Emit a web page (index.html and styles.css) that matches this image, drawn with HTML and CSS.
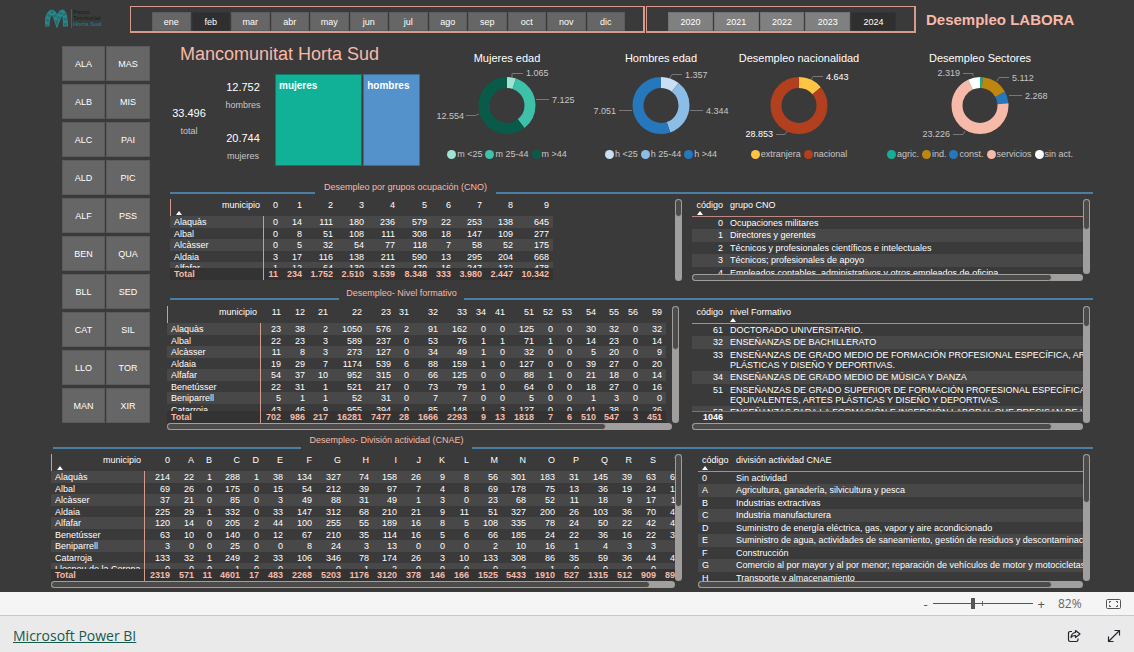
FILE: index.html
```html
<!DOCTYPE html>
<html lang="es">
<head>
<meta charset="utf-8">
<title>Desempleo LABORA</title>
<link rel="stylesheet" href="styles.css">
</head>
<body>
<div class="report">
  <header class="top">
    <div class="logo">
      <svg class="logo-mark" viewBox="0 0 23 18" aria-hidden="true">
        <path d="M2 17 C2 9 4 4 6 3 C9 1 11 9 12 12 C14 7 16 1 18 3 C20 5 20.500 10 20.500 17" fill="none" stroke="#26868c" stroke-width="5"/>
        <path d="M2 17 C2 9 4 4 6 3 C9 1 11 9 12 12 C14 7 16 1 18 3 C20 5 20.500 10 20.500 17" fill="none" stroke="#2f6a62" stroke-width="3" stroke-dasharray="2 3"/>
      </svg>
      <div class="logo-text"><span>Pacto</span><span>Territorial</span><span class="logo-accent">Horta Sud</span></div>
    </div>
    <div class="slicer months">
      <button>ene</button><button class="on">feb</button><button>mar</button><button>abr</button><button>may</button><button>jun</button><button>jul</button><button>ago</button><button>sep</button><button>oct</button><button>nov</button><button>dic</button>
    </div>
    <div class="slicer years">
      <button>2020</button><button>2021</button><button>2022</button><button>2023</button><button class="on">2024</button>
    </div>
    <h1>Desempleo LABORA</h1>
  </header>

  <div class="middle">
    <nav class="towns">
      <button>ALA</button><button>MAS</button>
      <button>ALB</button><button>MIS</button>
      <button>ALC</button><button>PAI</button>
      <button>ALD</button><button>PIC</button>
      <button>ALF</button><button>PSS</button>
      <button>BEN</button><button>QUA</button>
      <button>BLL</button><button>SED</button>
      <button>CAT</button><button>SIL</button>
      <button>LLO</button><button>TOR</button>
      <button>MAN</button><button>XIR</button>
    </nav>

    <main>
      <div class="overview">
        <div class="summary">
          <h2>Mancomunitat Horta Sud</h2>
          <div class="summary-body">
            <div class="kpi total"><b>33.496</b><span>total</span></div>
            <div class="kpi-pair">
              <div class="kpi"><b>12.752</b><span>hombres</span></div>
              <div class="kpi"><b>20.744</b><span>mujeres</span></div>
            </div>
            <div class="treemap"><div class="tile women">mujeres</div><div class="tile men">hombres</div></div>
          </div>
        </div>
        <div class="charts">
          <figure>
            <h3>Mujeres edad</h3>
            <svg class="donut" viewBox="-75 -40 150 80">
              <g class="ring">
                <circle r="23" pathLength="20744" stroke="#a0e3d5" stroke-dasharray="1065 20744"/>
                <circle r="23" pathLength="20744" stroke="#3dc2a9" stroke-dasharray="7125 20744" stroke-dashoffset="-1065"/>
                <circle r="23" pathLength="20744" stroke="#0a5a49" stroke-dasharray="12554 20744" stroke-dashoffset="-8190"/>
              </g>
              <path class="leader" d="M5 -28V-31.5H16M29 -5.5H42M-41 10.5H-32L-28 9"/>
              <text x="19" y="-29">1.065</text><text x="45" y="-2">7.125</text><text class="end" x="-43" y="14">12.554</text>
            </svg>
            <ul class="legend"><li class="m1">m &lt;25</li><li class="m2">m 25-44</li><li class="m3">m &gt;44</li></ul>
          </figure>
          <figure>
            <h3>Hombres edad</h3>
            <svg class="donut" viewBox="-75 -40 150 80">
              <g class="ring">
                <circle r="23" pathLength="12752" stroke="#c9dff3" stroke-dasharray="1357 12752"/>
                <circle r="23" pathLength="12752" stroke="#8bbde6" stroke-dasharray="4344 12752" stroke-dashoffset="-1357"/>
                <circle r="23" pathLength="12752" stroke="#2777bd" stroke-dasharray="7051 12752" stroke-dashoffset="-5701"/>
              </g>
              <path class="leader" d="M9 -27L11 -30.5H21M29 5.5H42M-42 5.5H-29"/>
              <text x="24" y="-27">1.357</text><text x="45" y="9">4.344</text><text class="end" x="-45" y="9">7.051</text>
            </svg>
            <ul class="legend"><li class="h1">h &lt;25</li><li class="h2">h 25-44</li><li class="h3">h &gt;44</li></ul>
          </figure>
          <figure>
            <h3>Desempleo nacionalidad</h3>
            <svg class="donut bright" viewBox="-75 -40 150 80">
              <g class="ring">
                <circle r="23" pathLength="33496" stroke="#ffc444" stroke-dasharray="4643 33496"/>
                <circle r="23" pathLength="33496" stroke="#b23f1e" stroke-dasharray="28853 33496" stroke-dashoffset="-4643"/>
              </g>
              <path class="leader" d="M12 -25L14 -28.5H24M-23 29.5H-14L-12 26"/>
              <text x="27" y="-25">4.643</text><text class="end" x="-26" y="32">28.853</text>
            </svg>
            <ul class="legend"><li class="n1">extranjera</li><li class="n2">nacional</li></ul>
          </figure>
          <figure class="sectors">
            <h3>Desempleo Sectores</h3>
            <svg class="donut" viewBox="-75 -40 150 80">
              <g class="ring">
                <circle r="23" pathLength="33496" stroke="#12b097" stroke-dasharray="571 33496"/>
                <circle r="23" pathLength="33496" stroke="#bd8610" stroke-dasharray="5112 33496" stroke-dashoffset="-571"/>
                <circle r="23" pathLength="33496" stroke="#2777bd" stroke-dasharray="2268 33496" stroke-dashoffset="-5683"/>
                <circle r="23" pathLength="33496" stroke="#f7b9a8" stroke-dasharray="23226 33496" stroke-dashoffset="-7951"/>
                <circle r="23" pathLength="33496" stroke="#ffffff" stroke-dasharray="2319 33496" stroke-dashoffset="-31177"/>
              </g>
              <path class="leader" d="M-17 -31.5H-7V-29M17 -24L19 -27.5H29M29 -9.5H42M-27 29.5H-17L-15 26"/>
              <text class="end" x="-20" y="-29">2.319</text><text x="32" y="-24">5.112</text><text x="45" y="-6">2.268</text><text class="end" x="-30" y="32">23.226</text>
            </svg>
            <ul class="legend"><li class="s1">agric.</li><li class="s2">ind.</li><li class="s3">const.</li><li class="s4">servicios</li><li class="s5">sin act.</li></ul>
          </figure>
        </div>
      </div>

      <section class="block cno">
        <div class="rule"><h2>Desempleo por grupos ocupación (CNO)</h2></div>
        <div class="block-body">
          <div class="view matrix-view">
            <table class="matrix">
              <thead><tr><th class="sorted">municipio<th>0<th>1<th>2<th>3<th>4<th>5<th>6<th>7<th>8<th>9</thead>
              <tbody>
                <tr><th>Alaquàs<td>0<td>14<td>111<td>180<td>236<td>579<td>22<td>253<td>138<td>645
                <tr><th>Albal<td>0<td>8<td>51<td>108<td>111<td>308<td>18<td>147<td>109<td>277
                <tr><th>Alcàsser<td>0<td>5<td>32<td>54<td>77<td>118<td>7<td>58<td>52<td>175
                <tr><th>Aldaia<td>3<td>17<td>116<td>138<td>211<td>590<td>13<td>295<td>204<td>668
                <tr><th>Alfafar<td>1<td>12<td>64<td>130<td>163<td>470<td>16<td>247<td>132<td>478
              </tbody>
              <tfoot><tr><th>Total<td>11<td>234<td>1.752<td>2.510<td>3.539<td>8.348<td>333<td>3.980<td>2.447<td>10.342</tfoot>
            </table>
            <div class="vbar"><span></span></div>
          </div>
          <div class="view key-view">
            <table class="key">
              <thead><tr><th class="sorted">código<th>grupo CNO</thead>
              <tbody>
                <tr><td>0<td>Ocupaciones militares
                <tr><td>1<td>Directores y gerentes
                <tr><td>2<td>Técnicos y profesionales científicos e intelectuales
                <tr><td>3<td>Técnicos; profesionales de apoyo
                <tr><td>4<td>Empleados contables, administrativos y otros empleados de oficina
              </tbody>
            </table>
            <div class="vbar"><span></span></div>
            <div class="hbar"><span></span></div>
          </div>
        </div>
      </section>

      <section class="block nivel">
        <div class="rule"><h2>Desempleo- Nivel formativo</h2></div>
        <div class="block-body">
          <div class="view matrix-view">
            <table class="matrix">
              <thead><tr><th>municipio<th>11<th>12<th>21<th>22<th>23<th>31<th>32<th>33<th>34<th>41<th>51<th>52<th>53<th>54<th>55<th>56<th>59</thead>
              <tbody>
                <tr><th>Alaquàs<td>23<td>38<td>2<td>1050<td>576<td>2<td>91<td>162<td>0<td>0<td>125<td>0<td>0<td>30<td>32<td>0<td>32
                <tr><th>Albal<td>22<td>23<td>3<td>589<td>237<td>0<td>53<td>76<td>1<td>1<td>71<td>1<td>0<td>14<td>23<td>0<td>14
                <tr><th>Alcàsser<td>11<td>8<td>3<td>273<td>127<td>0<td>34<td>49<td>1<td>0<td>32<td>0<td>0<td>5<td>20<td>0<td>9
                <tr><th>Aldaia<td>19<td>29<td>7<td>1174<td>539<td>6<td>88<td>159<td>1<td>0<td>127<td>0<td>0<td>39<td>27<td>0<td>20
                <tr><th>Alfafar<td>54<td>37<td>10<td>952<td>315<td>0<td>66<td>125<td>0<td>0<td>88<td>1<td>0<td>21<td>18<td>0<td>14
                <tr><th>Benetússer<td>22<td>31<td>1<td>521<td>217<td>0<td>73<td>79<td>1<td>0<td>64<td>0<td>0<td>18<td>27<td>0<td>16
                <tr><th>Beniparrell<td>5<td>1<td>1<td>52<td>31<td>0<td>7<td>7<td>0<td>0<td>5<td>0<td>0<td>1<td>3<td>0<td>0
                <tr><th>Catarroja<td>43<td>46<td>9<td>955<td>394<td>0<td>85<td>148<td>1<td>3<td>127<td>0<td>0<td>41<td>38<td>0<td>26
              </tbody>
              <tfoot><tr><th>Total<td>702<td>986<td>217<td>16281<td>7477<td>28<td>1666<td>2293<td>9<td>13<td>1818<td>7<td>6<td>510<td>547<td>3<td>451</tfoot>
            </table>
            <div class="vbar"><span></span></div>
            <div class="hbar"><span></span></div>
          </div>
          <div class="view key-view">
            <table class="key">
              <thead><tr><th>código<th class="sorted">nivel Formativo</thead>
              <tbody>
                <tr><td>61<td>DOCTORADO UNIVERSITARIO.
                <tr><td>32<td>ENSEÑANZAS DE BACHILLERATO
                <tr><td>33<td>ENSEÑANZAS DE GRADO MEDIO DE FORMACIÓN PROFESIONAL ESPECÍFICA, ARTES<br>PLÁSTICAS Y DISEÑO Y DEPORTIVAS.
                <tr><td>34<td>ENSEÑANZAS DE GRADO MEDIO DE MÚSICA Y DANZA
                <tr><td>51<td>ENSEÑANZAS DE GRADO SUPERIOR DE FORMACIÓN PROFESIONAL ESPECÍFICA Y<br>EQUIVALENTES, ARTES PLÁSTICAS Y DISEÑO Y DEPORTIVAS.
                <tr><td>53<td>ENSEÑANZAS PARA LA FORMACIÓN E INSERCIÓN LABORAL QUE PRECISAN DE UNA
              </tbody>
              <tfoot><tr><td>1046<td></tfoot>
            </table>
            <div class="vbar"><span></span></div>
            <div class="hbar"><span></span></div>
          </div>
        </div>
      </section>
    </main>
  </div>

  <section class="block cnae">
    <div class="rule"><h2>Desempleo- División actividad (CNAE)</h2></div>
    <div class="block-body">
      <div class="view matrix-view">
        <table class="matrix">
          <thead><tr><th class="sorted">municipio<th>0<th>A<th>B<th>C<th>D<th>E<th>F<th>G<th>H<th>I<th>J<th>K<th>L<th>M<th>N<th>O<th>P<th>Q<th>R<th>S<th>T</thead>
          <tbody>
            <tr><th>Alaquàs<td>214<td>22<td>1<td>288<td>1<td>38<td>134<td>327<td>74<td>158<td>26<td>9<td>8<td>56<td>301<td>183<td>31<td>145<td>39<td>63<td>66
            <tr><th>Albal<td>69<td>26<td>0<td>175<td>0<td>15<td>54<td>212<td>39<td>97<td>7<td>4<td>8<td>69<td>178<td>75<td>13<td>36<td>19<td>24<td>16
            <tr><th>Alcàsser<td>37<td>21<td>0<td>85<td>0<td>3<td>49<td>88<td>31<td>49<td>1<td>3<td>0<td>23<td>68<td>52<td>11<td>18<td>9<td>17<td>11
            <tr><th>Aldaia<td>225<td>29<td>1<td>332<td>0<td>33<td>147<td>312<td>68<td>210<td>21<td>9<td>11<td>51<td>327<td>200<td>26<td>103<td>36<td>70<td>41
            <tr><th>Alfafar<td>120<td>14<td>0<td>205<td>2<td>44<td>100<td>255<td>55<td>189<td>16<td>8<td>5<td>108<td>335<td>78<td>24<td>50<td>22<td>42<td>46
            <tr><th>Benetússer<td>63<td>10<td>0<td>140<td>0<td>12<td>67<td>210<td>35<td>114<td>16<td>5<td>6<td>66<td>185<td>24<td>22<td>36<td>16<td>22<td>33
            <tr><th>Beniparrell<td>3<td>0<td>0<td>25<td>0<td>0<td>8<td>24<td>3<td>13<td>0<td>0<td>0<td>2<td>10<td>16<td>1<td>4<td>3<td>3<td>1
            <tr><th>Catarroja<td>133<td>32<td>1<td>249<td>2<td>33<td>106<td>346<td>78<td>174<td>26<td>3<td>10<td>133<td>308<td>86<td>35<td>59<td>36<td>44<td>46
            <tr><th>Llocnou de la Corona<td>0<td>0<td>0<td>1<td>0<td>0<td>1<td>0<td>1<td>2<td>0<td>0<td>0<td>0<td>2<td>1<td>0<td>0<td>0<td>0<td>0
          </tbody>
          <tfoot><tr><th>Total<td>2319<td>571<td>11<td>4601<td>17<td>483<td>2268<td>5203<td>1176<td>3120<td>378<td>146<td>166<td>1525<td>5433<td>1910<td>527<td>1315<td>512<td>909<td>890</tfoot>
        </table>
        <div class="vbar"><span></span></div>
        <div class="hbar"><span></span></div>
      </div>
      <div class="view key-view">
        <table class="key letters">
          <thead><tr><th class="sorted">código<th>división actividad CNAE</thead>
          <tbody>
            <tr><td>0<td>Sin actividad
            <tr><td>A<td>Agricultura, ganadería, silvicultura y pesca
            <tr><td>B<td>Industrias extractivas
            <tr><td>C<td>Industria manufacturera
            <tr><td>D<td>Suministro de energía eléctrica, gas, vapor y aire acondicionado
            <tr><td>E<td>Suministro de agua, actividades de saneamiento, gestión de residuos y descontaminación
            <tr><td>F<td>Construcción
            <tr><td>G<td>Comercio al por mayor y al por menor; reparación de vehículos de motor y motocicletas
            <tr><td>H<td>Transporte y almacenamiento
          </tbody>
        </table>
        <div class="vbar"><span></span></div>
        <div class="hbar"><span></span></div>
      </div>
    </div>
  </section>
</div>

<div class="zoombar">
  <button aria-label="Alejar">-</button>
  <input type="range" min="0" max="100" value="40" aria-label="Zoom">
  <button aria-label="Acercar">+</button>
  <output>82%</output>
  <button class="fit" aria-label="Ajustar a la página">
    <svg viewBox="0 0 15 12" fill="none" stroke="#555"><rect x=".5" y="1.5" width="14" height="9" rx="1"/><path d="M3.5 5V3.5H5M10 3.5H11.5V5M11.5 7V8.5H10M5 8.5H3.500V7"/></svg>
  </button>
</div>
<footer>
  <a href="#">Microsoft Power BI</a>
  <button aria-label="Compartir"><svg viewBox="0 0 14 14" fill="none" stroke="#2b2430" stroke-width="1.2" stroke-linejoin="round"><path d="M5 2.500H3.200Q1.500 2.500 1.500 4.200V10.800Q1.500 12.500 3.200 12.500H9.300Q11 12.500 11 10.800V9.500"/><path d="M8.500 1.500L13 5L8.500 8.500V6.500Q5.500 6.300 4 8.500Q4.500 4 8.500 3.500Z"/></svg></button>
  <button aria-label="Pantalla completa"><svg viewBox="0 0 14 14" fill="none" stroke="#2b2430" stroke-width="1.2"><path d="M1.500 12.500L12.500 1.500M7.500 1.500H12.500V6.500M1.500 7.500V12.500H6.500"/></svg></button>
</footer>
</body>
</html>
```
FILE: styles.css
```css
* { box-sizing: border-box; }
body {
  margin: 0;
  min-height: 100vh;
  display: flex;
  flex-direction: column;
  background: #eaeaea;
  font-family: "Liberation Sans", Arial, sans-serif;
  font-size: 9px;
  line-height: 12px;
}
h1, h2, h3, figure, ul { margin: 0; padding: 0; }
button { font: inherit; color: inherit; border: 0; padding: 0; background: none; cursor: pointer; }

.report { background: #3a3a3a; color: #fff; padding: 6px 41px 4px 0; }

/* header */
.top { display: flex; align-items: flex-start; height: 40px; }
.logo { display: flex; gap: 3px; width: 130px; padding: 3px 0 0 45px; flex: none; }
.logo-mark { width: 23px; height: 19px; }
.logo-text { display: flex; flex-direction: column; border-left: 1px solid #1f6f74; padding-left: 1px; font-size: 6px; font-weight: bold; line-height: 6px; color: #152b25; }
.logo-accent { color: #1f7486; }
.slicer { display: flex; gap: 1px; height: 27px; padding: 5px 18px 0 21px; border: solid #d59c8e; border-width: 1px 2px 2px 1px; }
.slicer button { flex: 1; height: 19px; background: #666; border: 1px solid #5c5c5c; }
.months { width: 515px; }
.years { width: 270px; margin-left: 1px; }
.years button { background: #808080; border-color: #747474; }
.slicer .on { background: #2f2f2f; border-color: #333; }
h1 { margin-left: 10px; font-size: 15px; line-height: 28px; color: #f7b9a8; white-space: nowrap; }

/* municipality slicer */
.middle { display: flex; align-items: flex-start; }
.towns { display: grid; grid-template-columns: 43px 44px; grid-auto-rows: 35px; gap: 3px 1px; width: 88px; margin-left: 62px; flex: none; }
.towns button { background: #666; border: 1px solid #5a5a5a; }
main { flex: 1; min-width: 0; margin-left: 17px; }

/* overview */
.overview { display: flex; height: 135px; }
.summary { width: 263px; flex: none; }
.summary h2 { padding-left: 13px; font-size: 18px; line-height: 17px; font-weight: normal; color: #f7b9a8; white-space: nowrap; }
.summary-body { display: flex; align-items: center; margin-top: 11px; height: 92px; }
.kpi { display: flex; flex-direction: column; align-items: center; gap: 6px; color: #c8c6c4; }
.kpi b { font-size: 11px; font-weight: normal; color: #fff; }
.total { width: 44px; padding-top: 3px; }
.kpi-pair { display: flex; flex-direction: column; gap: 21px; width: 64px; padding-top: 2px; }
.treemap { display: flex; gap: 1px; width: 145px; height: 92px; }
.tile { border: 1px solid #0e7a6a; padding: 5px 3px; font-size: 10px; font-weight: bold; }
.women { flex: 20744; background: #10b196; }
.men { flex: 12752; background: #5392cb; border-color: #3f6c96; }

.charts { flex: 1; display: grid; grid-template-columns: 154px 154px 122px 1fr; padding-top: 6px; }
figure { display: flex; flex-direction: column; align-items: center; min-width: 0; }
.sectors { padding-left: 7px; }
figure h3 { font-size: 11px; line-height: 13px; font-weight: normal; white-space: nowrap; }
.donut { width: 150px; height: 80px; overflow: visible; flex: none; }
.ring { fill: none; stroke-width: 11; transform: translateY(.5px) rotate(-90deg); }
.leader { fill: none; stroke: #777; }
.donut text { fill: #c8c6c4; font-size: 9px; }
.donut .end { text-anchor: end; }
.bright text { fill: #fff; }
.legend { display: flex; gap: 3px; margin-top: 3px; list-style: none; color: #c8c6c4; white-space: nowrap; }
.legend li { display: flex; align-items: center; gap: 1px; }
.legend li::before { content: ""; width: 9px; height: 9px; border-radius: 50%; background: var(--dot); }
.m1 { --dot: #a0e3d5; } .m2 { --dot: #3dc2a9; } .m3 { --dot: #0a5a49; }
.h1 { --dot: #c9dff3; } .h2 { --dot: #8bbde6; } .h3 { --dot: #2777bd; }
.n1 { --dot: #ffc444; } .n2 { --dot: #b23f1e; }
.s1 { --dot: #12b097; } .s2 { --dot: #bd8610; } .s3 { --dot: #2777bd; } .s4 { --dot: #f7b9a8; } .s5 { --dot: #fff; }

/* section headings */
.rule { display: flex; align-items: flex-start; padding-left: 3px; height: 13px; }
.rule::before, .rule::after { content: ""; height: 2px; background: #4a7ea3; align-self: flex-end; }
.rule::before { width: var(--lead); flex: none; }
.rule::after { flex: 1; }
.rule h2 { width: var(--name); flex: none; text-align: center; font-size: 9px; line-height: 12px; font-weight: normal; color: #f7b9a8; white-space: nowrap; }
.block-body { display: flex; gap: var(--gap); padding: 6px 3px 0 0; }
.cno { --lead: 145px; --name: 181px; --gap: 10px; }
.cno .block-body { padding: 5px 3px 0; }
.nivel { --lead: 169px; --name: 125px; --gap: 13px; margin-top: 6px; }
.cnae { --lead: 248px; --name: 171px; --gap: 16px; margin: 4px 0 0 51px; }
.cnae .rule { height: 15px; padding-left: 2px; }
.cnae .block-body { padding-top: 5px; }

/* scrolling views */
.view { display: grid; grid-template-columns: minmax(0, 1fr) 7px; grid-template-rows: auto auto; }
.matrix-view { width: var(--view); flex: none; }
.key-view { flex: 1; min-width: 0; }
.vbar, .hbar { background: #a09f9e; border-radius: 4px; }
.hbar { height: 7px; }
.vbar span, .hbar span { display: block; background: #4d4b49; border: 1px solid #a09f9e; border-radius: 4px; }
.vbar span { height: var(--thumb-y); }
.hbar span { height: 7px; width: var(--thumb-x); }

/* tables */
table, thead, tbody, tfoot { display: block; }
table { overflow: hidden; }
tr { display: grid; }
th, td { padding: 0; font-weight: normal; white-space: nowrap; }
thead tr { height: 17px; }
tbody { height: var(--rows); overflow: hidden; }
.sorted { position: relative; }
.sorted::after { content: ""; position: absolute; left: 5px; bottom: 1px; border: solid transparent; border-width: 0 3px 4px; border-bottom-color: #fff; }

.matrix tr { grid-template-columns: var(--cols); width: max-content; }
.matrix th, .matrix td { padding-right: 4px; text-align: right; line-height: 12px; }
.matrix tbody tr { height: 11px; }
.matrix tbody tr:nth-child(odd) { height: 12px; background: #484848; }
.matrix tbody th, .matrix tfoot th { padding-left: 4px; text-align: left; border-right: 1px solid #d59c8e; }
.matrix tbody th { overflow: hidden; }
.matrix thead th:first-child { border-left: 1px solid #d59c8e; }
.matrix tfoot tr { background: #333; height: 12px; }
.matrix tfoot th, .matrix tfoot td { color: #f7b9a8; font-weight: bold; }

.key tr { grid-template-columns: 31px 1fr; column-gap: 7px; }
.key th, .key td { text-align: left; line-height: 10px; }
.key thead { border-bottom: 1px solid #b98b80; }
.key thead th { line-height: 12px; }
.key th:first-child, .key td:first-child { text-align: right; }
.key tbody tr { padding: 1px 0; }
.key tbody tr:nth-child(even) { background: #484848; padding-bottom: 2px; }
.key th:nth-child(2)::after { left: 0; }
.key.letters tr { grid-template-columns: 30px 1fr; padding-left: 4px; column-gap: 4px; }
.key.letters th, .key.letters td { text-align: left; }
.key.letters .sorted::after { left: 0; }
.key tfoot { border-top: 1px solid #8a6f69; }
.key tfoot td { font-weight: bold; }

.cno .matrix-view { --view: 512px; --rows: 52px; --thumb-y: 18px; --cols: 94px 18px 24px 31px 31px 31px 32px 24px 31px 31px 36px; }
.cno .key-view { --rows: 57px; --thumb-y: 31px; --thumb-x: 92%; }
.nivel .matrix-view { --view: 512px; --rows: 88px; --thumb-y: 44px; --thumb-x: 87%; --cols: 94px 24px 24px 23px 34px 29px 18px 29px 29px 19px 19px 29px 19px 19px 24px 23px 19px 24px; }
.nivel .key-view { --rows: 87px; --thumb-y: 21px; --thumb-x: 92%; }
.cnae .matrix-view { --view: 631px; --rows: 98px; --thumb-y: 53px; --thumb-x: 96%; --cols: 94px 29px 24px 18px 28px 19px 24px 29px 29px 28px 28px 24px 24px 24px 29px 28px 29px 24px 29px 24px 24px 24px; }
.cnae .key-view { --rows: 109px; --thumb-y: 49px; --thumb-x: 92%; }

/* zoom bar and footer */
.zoombar { display: flex; align-items: center; justify-content: flex-end; height: 24px; padding-right: 13px; background: #f5f5f5; border-bottom: 1px solid #c8c8c8; color: #555; font: 13px/20px "Open Sans", sans-serif; }
.zoombar input { appearance: none; width: 100px; height: 12px; margin: 0 5px; background: linear-gradient(#666, #666) 50% 50% / 1px 5px no-repeat, linear-gradient(#555, #555) 50% 50% / 100% 1px no-repeat; }
.zoombar input::-webkit-slider-thumb { appearance: none; width: 4px; height: 11px; background: #555; }
.zoombar output { width: 24px; margin-left: 13px; font-size: 12px; color: #666; }
.zoombar .fit { margin-left: 24px; display: flex; }
.fit svg { width: 15px; height: 12px; }
footer { flex: 1; display: flex; align-items: center; gap: 26px; padding: 4px 13px 0; min-height: 36px; }
footer a { margin-right: auto; color: #17594d; font: 14px/20px "Open Sans", sans-serif; }
footer button { display: flex; }
footer svg { width: 14px; height: 14px; }
```
